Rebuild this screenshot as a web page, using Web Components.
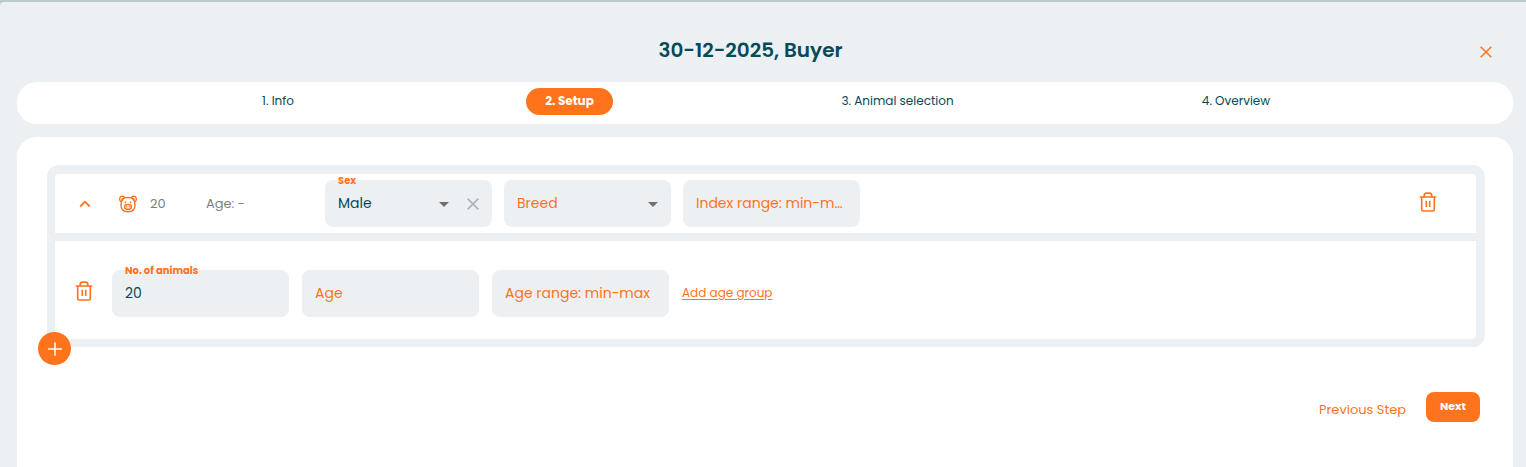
<!DOCTYPE html>
<html lang="en">
<head>
<meta charset="utf-8">
<title>30-12-2025, Buyer</title>
<style>
  html { background: #b9cacc; }
  body {
    margin: 0;
    --accent: #ff731c;
    --ink: #054a55;
    --surface: #ecf0f3;
    --muted: #808080;
    color: var(--ink);
    font: 12px/20px Poppins, Inter, "Liberation Sans", sans-serif;
  }
</style>
</head>
<body>
<order-dialog heading="30-12-2025, Buyer">
  <step-bar slot="steps">
    <step-item>1. Info</step-item>
    <step-item active>2. Setup</step-item>
    <step-item>3. Animal selection</step-item>
    <step-item>4. Overview</step-item>
  </step-bar>
  <animal-group count="20" age="-">
    <select-field slot="filters" label="Sex" value="Male" options="Male,Female" clearable></select-field>
    <select-field slot="filters" label="Breed"></select-field>
    <text-field slot="filters" label="Index range: min-max"></text-field>
    <text-field slot="ages" label="No. of animals" value="20"></text-field>
    <text-field slot="ages" label="Age"></text-field>
    <text-field slot="ages" label="Age range: min-max"></text-field>
  </animal-group>
  <step-actions></step-actions>
</order-dialog>

<script>
const RESET = `
  * { box-sizing: border-box; }
  button { font: inherit; color: inherit; background: none; border: 0; padding: 0; margin: 0; cursor: pointer; }
  svg { display: block; }
`;

class BaseElement extends HTMLElement {
  connectedCallback() {
    if (this.shadowRoot) return;
    this.attachShadow({ mode: 'open' }).innerHTML = `<style>${RESET}${this.styles()}</style>${this.markup()}`;
  }
  attr(name) { return this.getAttribute(name) || ''; }
}

const ICONS = {
  close: ['12', '12', '<path d="M.7.7l10.6 10.6M11.3.7L.7 11.3" stroke-width="1.5"/>'],
  clear: ['12', '12', '<path d="M.6.6l10.8 10.8M11.4.6L.6 11.4" stroke-width="1.5"/>'],
  chevron: ['12', '8', '<path d="M1.2 6.5L6 1.7l4.8 4.8" stroke-width="1.8"/>'],
  arrow: ['10', '5', '<path d="M0 0h10L5 5z" fill="currentColor" stroke="none"/>'],
  plus: ['14', '14', '<path d="M7 .2v13.6M.2 7h13.6" stroke-width="1.6"/>'],
  trash: ['18', '20', '<path d="M.7 5h16.6M5.2 5V3.4Q5.2 1.1 7.5 1.1h3Q12.8 1.1 12.8 3.4V5M2.7 5v12.3q0 1.7 1.7 1.7h9.2q1.7 0 1.7-1.7V5M7.3 8.8v6.3M10.7 8.8v6.3" stroke-width="1.6"/>'],
  pig: ['18', '18', '<path d="M5.8 2.9C4.8.7 1.3.8.8 3.1.4 4.9 1.2 6.4 2.6 7M12.2 2.9C13.2.7 16.700.8 17.2 3.1c.4 1.800-.4 3.300-1.800 3.900M2.900 5.300c-.3-1.300.8-2.200 2-1.600M15.100 5.300c.3-1.300-.8-2.200-2-1.600M5.800 2.900Q9 2 12.200 2.900C14.600 4 16 6.600 16 10c0 4.500-2.800 6.700-7 6.700S2 14.500 2 10c0-3.400 1.400-6 3.800-7.100z"/><ellipse cx="9" cy="11.900" rx="3.500" ry="2.400"/><path d="M7.800 11.200v1.400M10.200 11.200v1.400M6.500 6.600v1.700M11.500 6.600v1.700"/>'],
};

class UiIcon extends BaseElement {
  styles() { return ':host { display: block; flex: none; }'; }
  markup() {
    const [w, h, body] = ICONS[this.attr('name')];
    return `<svg width="${w}" height="${h}" viewBox="0 0 ${w} ${h}" fill="none" stroke="currentColor" stroke-width="1.4" aria-hidden="true">${body}</svg>`;
  }
}

class OrderDialog extends BaseElement {
  styles() {
    return `
      :host { display: flex; flex-direction: column; min-height: calc(100vh - 2px); margin-top: 2px; padding: 0 13px 0 17px;
              background: var(--surface); border-top-left-radius: 4px; }
      header { display: grid; grid-template-columns: 1fr auto 1fr; align-items: center; height: 80px; padding: 16px 21px 0 0; }
      h1 { grid-column: 2; margin: 0; font-size: 20px; line-height: 32px; font-weight: 600; padding-right: 8px; }
      header button { justify-self: end; color: var(--accent); padding-top: 4px; }
      main { flex: 1; margin-top: 13px; padding: 28px 28px 45px 30px; background: #fff; border-radius: 20px 20px 0 0; }
    `;
  }
  markup() {
    return `
      <header><h1>${this.attr('heading')}</h1><button type="button" aria-label="Close"><ui-icon name="close"></ui-icon></button></header>
      <slot name="steps"></slot>
      <main><slot></slot></main>
    `;
  }
}

class StepBar extends BaseElement {
  styles() {
    return `
      :host { display: block; }
      nav { display: grid; grid-template-columns: 250fr 333fr 323fr 354fr; justify-items: center; align-items: start;
            height: 42px; padding: 6px 100px 0 136px; background: #fff; border-radius: 20px; }
    `;
  }
  markup() { return '<nav aria-label="Steps"><slot></slot></nav>'; }
}

class StepItem extends BaseElement {
  styles() {
    return `
      :host { display: block; }
      button { height: 27px; padding: 0 19px 2px; border-radius: 14px; line-height: 24px; white-space: nowrap; }
      :host([active]) button { background: var(--accent); color: #fff; font-weight: 700; }
    `;
  }
  markup() { return '<button type="button"><slot></slot></button>'; }
}

const FIELD = `
  :host { display: block; position: relative; flex: none; width: 177px; }
  input, select { display: block; width: 100%; height: 47px; margin: 0; padding: 0 13px; border: 0; border-radius: 8px; outline: 0;
                  background: var(--surface); color: var(--ink); font: inherit; font-size: 14px; text-overflow: ellipsis; appearance: none; }
  select { padding-bottom: 2px; }
  input::placeholder { color: var(--accent); opacity: 1; }
  label { position: absolute; left: 13px; top: -6px; color: var(--accent); font-size: 10px; line-height: 14px; font-weight: 700; }
`;

class TextField extends BaseElement {
  styles() { return FIELD; }
  markup() {
    const label = this.attr('label');
    return this.attr('value')
      ? `<label for="field">${label}</label><input id="field" value="${this.attr('value')}">`
      : `<input id="field" aria-label="${label}" placeholder="${label}">`;
  }
}

class SelectField extends BaseElement {
  styles() {
    return `${FIELD}
      :host { width: 167px; }
      select.empty { color: var(--accent); }
      .tools { position: absolute; right: 13px; top: 0; height: 48px; display: flex; align-items: center; gap: 18px;
               color: #707070; pointer-events: none; }
      .tools button { color: #adb1b4; pointer-events: auto; }
    `;
  }
  markup() {
    const label = this.attr('label'), value = this.attr('value');
    const options = value
      ? this.attr('options').split(',').map(o => `<option${o === value ? ' selected' : ''}>${o}</option>`).join('')
      : `<option>${label}</option>`;
    return `
      ${value ? `<label for="field">${label}</label>` : ''}
      <select id="field" class="${value ? '' : 'empty'}" ${value ? '' : `aria-label="${label}"`}>${options}</select>
      <span class="tools"><ui-icon name="arrow"></ui-icon>${this.hasAttribute('clearable')
        ? '<button type="button" aria-label="Clear"><ui-icon name="clear"></ui-icon></button>' : ''}</span>
    `;
  }
}

class AnimalGroup extends BaseElement {
  styles() {
    return `
      :host { display: grid; gap: 8px; position: relative; padding: 9px 9px 8px 8px; background: var(--surface); border-radius: 12px; }
      .row { display: flex; align-items: center; background: #fff; }
      .summary { height: 59px; padding: 0 39px 0 24px; border-radius: 4px 4px 0 0; color: var(--muted); }
      .ages { height: 98px; padding-left: 20px; padding-top: 6px; border-radius: 0 0 4px 4px; }
      .icon, .add { color: var(--accent); }
      .pig { width: 18px; margin-left: 28px; color: var(--accent); }
      .count { width: 56px; margin-left: 13px; font-size: 13px; }
      .age { width: 119px; font-size: 13px; }
      .fields { display: flex; gap: 13px; }
      .summary .fields { gap: 12px; }
      .summary .icon:last-child { margin-left: auto; padding-bottom: 4px; }
      .ages .icon { margin-right: 19px; padding-bottom: 4px; }
      a { margin-left: 13px; color: var(--accent); text-underline-offset: 2px; }
      .add { position: absolute; left: -9px; bottom: -18px; width: 33px; height: 33px; display: grid; place-items: center;
             border-radius: 50%; background: var(--accent); color: #fff; }
    `;
  }
  markup() {
    return `
      <div class="row summary">
        <button class="icon" type="button" aria-label="Collapse"><ui-icon name="chevron"></ui-icon></button>
        <ui-icon class="pig" name="pig"></ui-icon>
        <span class="count">${this.attr('count')}</span>
        <span class="age">Age: ${this.attr('age')}</span>
        <div class="fields"><slot name="filters"></slot></div>
        <button class="icon" type="button" aria-label="Delete group"><ui-icon name="trash"></ui-icon></button>
      </div>
      <div class="row ages">
        <button class="icon" type="button" aria-label="Delete age group"><ui-icon name="trash"></ui-icon></button>
        <div class="fields"><slot name="ages"></slot></div>
        <a href="#">Add age group</a>
      </div>
      <button class="add" type="button" aria-label="Add group"><ui-icon name="plus"></ui-icon></button>
    `;
  }
}

class StepActions extends BaseElement {
  styles() {
    return `
      :host { display: flex; justify-content: flex-end; align-items: flex-start; gap: 20px; margin-top: 45px; padding-right: 5px; color: var(--accent); }
      .previous { font-size: 13px; line-height: 20px; padding-top: 8px; }
      .next { min-width: 54px; height: 30px; padding-bottom: 2px; border-radius: 8px; background: var(--accent); color: #fff; font-size: 11px; line-height: 28px; font-weight: 700; }
    `;
  }
  markup() { return '<button class="previous" type="button">Previous Step</button><button class="next" type="button">Next</button>'; }
}

customElements.define('ui-icon', UiIcon);
customElements.define('order-dialog', OrderDialog);
customElements.define('step-bar', StepBar);
customElements.define('step-item', StepItem);
customElements.define('text-field', TextField);
customElements.define('select-field', SelectField);
customElements.define('animal-group', AnimalGroup);
customElements.define('step-actions', StepActions);
</script>
</body>
</html>
